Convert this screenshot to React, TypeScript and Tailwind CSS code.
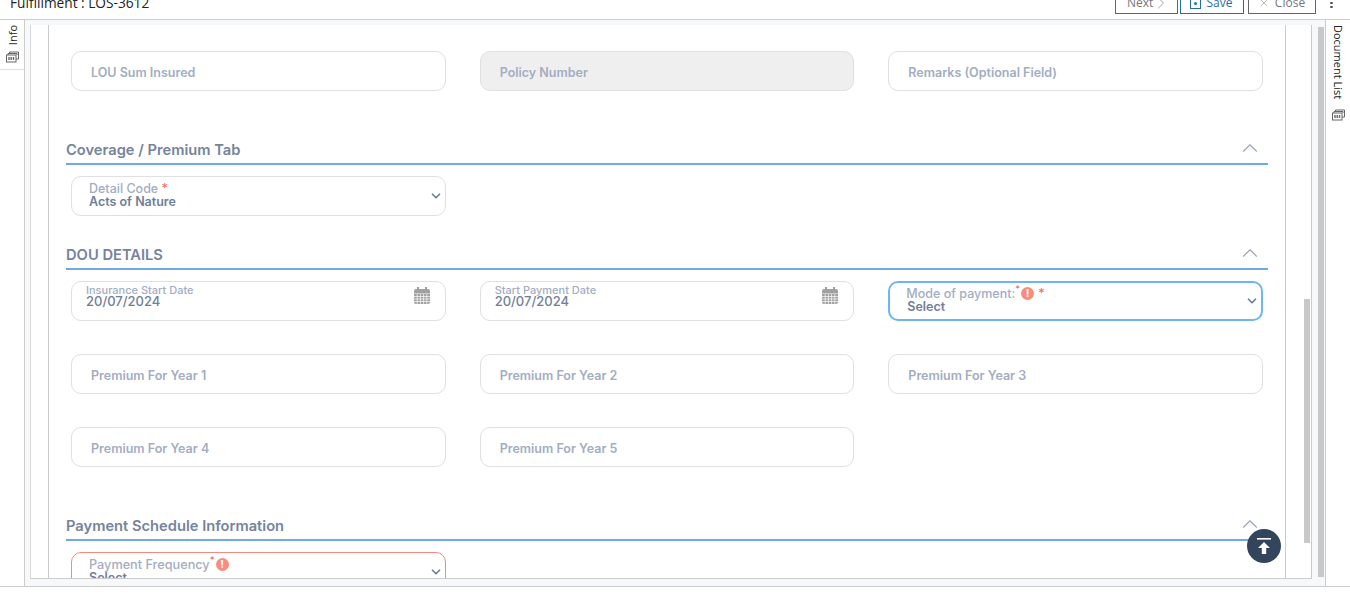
import React from 'react';
import { ChevronDown, ChevronRight, ChevronUp, X } from 'lucide-react';

const labelFont = "font-['Inter','Liberation_Sans',sans-serif]";

const StackIcon = ({ className }: { className?: string }) => (
  <svg className={className} width="13" height="12" viewBox="0 0 13 12" fill="none" stroke="#666" strokeWidth="1">
    <path d="M3.5 2.5V1h9v7H10" />
    <path d="M2 4V2.5h9V4" />
    <rect x="0.5" y="4" width="9.5" height="7" fill="#fff" />
    <path d="M3 6v3M5.2 6v3M7.5 6v3" strokeWidth="1.4" />
  </svg>
);

const CalendarIcon = () => (
  <svg className="absolute right-[15px] top-[5px]" width="16" height="17" viewBox="0 0 16 17">
    <path d="M0 4a2 2 0 0 1 2-2h1V0h2v2h6V0h2v2h1a2 2 0 0 1 2 2v2H0z" fill="#a0a0a0" />
    <path d="M0 6.5h16V15a2 2 0 0 1-2 2H2a2 2 0 0 1-2-2z" fill="#a0a0a0" />
    <path d="M0 9.5h16M0 12h16M0 14.5h16M3.2 7v10M6.4 7v10M9.6 7v10M12.8 7v10" stroke="#fff" strokeWidth="0.7" />
  </svg>
);

const AlertDot = () => (
  <span className="ml-[1px] flex h-[13px] w-[13px] items-center justify-center rounded-full bg-[#fb8b7c] text-[11px] font-bold leading-none text-white">
    !
  </span>
);

const TextField = ({ label, disabled }: { label: string; disabled?: boolean }) => (
  <div
    className={`flex h-[40px] items-center rounded-[10px] border border-[#e0e0e0] pl-[19px] pt-[4px] text-[12.5px] font-semibold text-[#a3adc2] ${
      disabled ? 'bg-[#efefef]' : 'bg-white'
    }`}
  >
    {label}
  </div>
);

const DateField = ({ label, value }: { label: string; value: string }) => (
  <div className="relative flex h-[40px] flex-col rounded-[10px] border border-[#e0e0e0] bg-white pl-[14px] pt-[3px]">
    <span className="text-[11px] font-medium leading-[11px] text-[#a3adc2]">{label}</span>
    <span className="text-[13px] font-medium leading-[11px] text-[#6f7f99]">{value}</span>
    <CalendarIcon />
  </div>
);

const SectionHeader = ({ title }: { title: string }) => (
  <div className="flex h-[30px] items-center justify-between border-b-2 border-[#70a9e6] pr-[5px]">
    <span className="mt-[2px] text-[14.7px] font-semibold text-[#75849c]">{title}</span>
    <ChevronUp className="-mt-[2px] text-[#9aa4b5]" size={26} strokeWidth={1} />
  </div>
);

const App: React.FC = () => {
  return (
    <div className={`flex h-[602px] w-[1350px] flex-col overflow-hidden bg-white ${labelFont}`}>
      {/* Top bar, scrolled partly out of view */}
      <header className="flex h-[20px] shrink-0 items-end justify-between overflow-hidden border-b border-[#cccccc] pb-[5px] pl-[10px] pr-[17px] font-['Open_Sans',sans-serif]">
        <span className="mb-[1px] text-[13.7px] leading-[20px] text-[#222222]">Fulfillment : LOS-3612</span>
        <div className="flex items-end">
          <button className="flex h-[22px] w-[63px] shrink-0 items-center border border-[#666666] pl-[11px] text-[12px] text-[#777777]">
            Next <ChevronRight className="-ml-[2px]" size={20} strokeWidth={0.8} />
          </button>
          <button className="ml-[2px] flex h-[22px] w-[64px] shrink-0 items-center justify-center gap-[6px] border border-[#1f6fa8] pr-[2px] text-[12px] text-[#1f6fa8]">
            <span className="flex h-[11px] w-[11px] items-center justify-center border border-[#1f6fa8]">
              <span className="h-[3px] w-[3px] rounded-full bg-[#1f6fa8]" />
            </span>
            Save
          </button>
          <button className="ml-[4px] flex h-[22px] w-[68px] shrink-0 items-center justify-center gap-[5px] border border-[#666666] pr-[1px] text-[12px] text-[#777777]">
            <X size={12} strokeWidth={1} /> Close
          </button>
          <div className="ml-[14px] flex flex-col gap-[2px] pb-[6px]">
            <span className="h-[2px] w-[3px] rounded-full bg-[#555555]" />
            <span className="h-[2px] w-[3px] rounded-full bg-[#555555]" />
          </div>
        </div>
      </header>

      <div className="flex h-[567px] shrink-0 border-b border-[#cccccc]">
        {/* Left rail */}
        <aside className="w-[25px] shrink-0 border-r border-[#cccccc]">
          <div className="flex h-[50px] flex-col items-center gap-[6px] border-b border-[#dddddd] pt-[5px]">
            <span className="ml-[1px] rotate-180 font-['Open_Sans',sans-serif] text-[11px] leading-none text-[#222222] [writing-mode:vertical-rl]">
              Info
            </span>
            <StackIcon />
          </div>
        </aside>

        {/* Main */}
        <main className="flex w-[1300px] shrink-0 bg-[#f7f8fa] pb-[7px] pl-[5px] pt-[5px]">
          <div className="flex h-[554px] w-[1282px] shrink-0 overflow-hidden border-x border-b border-b-[#cccccc] border-l-[#d8d8d8] border-r-[#cccccc] bg-white">
            <div className="h-full w-[18px] shrink-0 border-r border-[#cccccc]" />
            <div className="h-full w-[1236px] shrink-0 overflow-hidden pl-[17px] pt-[26px]">
              <div className="w-[1202px]">
                <div className="grid grid-cols-3 gap-x-[34px] gap-y-[33px] px-[5px]">
                  <TextField label="LOU Sum Insured" />
                  <TextField label="Policy Number" disabled />
                  <TextField label="Remarks (Optional Field)" />
                </div>

                <div className="mt-[44px]">
                  <SectionHeader title="Coverage / Premium Tab" />
                </div>
                <div className="mt-[11px] grid grid-cols-3 gap-x-[34px] px-[5px]">
                  <div className="relative flex h-[40px] flex-col rounded-[10px] border border-[#e0e0e0] bg-white pl-[17px] pt-[5px]">
                    <span className="text-[12.5px] font-medium leading-[13px] text-[#a3adc2]">
                      Detail Code <span className="text-[#f0706a]">*</span>
                    </span>
                    <span className="text-[12.5px] font-semibold leading-[13px] text-[#6f7f99]">Acts of Nature</span>
                    <ChevronDown className="absolute right-[2px] top-[12px] text-[#6f7f99]" size={14} strokeWidth={3} />
                  </div>
                </div>

                <div className="mt-[24px]">
                  <SectionHeader title="DOU DETAILS" />
                </div>
                <div className="mt-[11px] grid grid-cols-3 gap-x-[34px] gap-y-[33px] px-[5px]">
                  <DateField label="Insurance Start Date" value="20/07/2024" />
                  <DateField label="Start Payment Date" value="20/07/2024" />
                  <div className="relative flex h-[40px] flex-col rounded-[10px] border-2 border-[#6cb6f5] bg-white pl-[16px] pt-[4px]">
                    <span className="flex items-center text-[12.5px] font-medium leading-[13px] text-[#a3adc2]">
                      Mode of payment:
                      <sup className="text-[#f0706a]">*</sup>
                      <AlertDot />
                      <span className="ml-[4px] text-[#f0706a]">*</span>
                    </span>
                    <span className="pl-[1px] text-[12.5px] font-semibold leading-[13px] text-[#6f7f99]">Select</span>
                    <ChevronDown className="absolute right-[2px] top-[11px] text-[#6f7f99]" size={14} strokeWidth={3} />
                  </div>
                  <TextField label="Premium For Year 1" />
                  <TextField label="Premium For Year 2" />
                  <TextField label="Premium For Year 3" />
                  <TextField label="Premium For Year 4" />
                  <TextField label="Premium For Year 5" />
                </div>

                <div className="mt-[44px]">
                  <SectionHeader title="Payment Schedule Information" />
                </div>
                <div className="mt-[11px] grid grid-cols-3 gap-x-[34px] px-[5px]">
                  <div className="relative flex h-[40px] flex-col rounded-[10px] border border-[#f28b7e] bg-white pl-[17px] pt-[5px]">
                    <span className="flex items-center text-[12.7px] font-medium leading-[13px] text-[#a3adc2]">
                      Payment Frequency
                      <sup className="text-[#f0706a]">*</sup>
                      <AlertDot />
                    </span>
                    <span className="text-[12.5px] font-semibold leading-[13px] text-[#6f7f99]">Select</span>
                    <ChevronDown className="absolute right-[2px] top-[12px] text-[#6f7f99]" size={14} strokeWidth={3} />
                  </div>
                </div>
              </div>
            </div>
            {/* Inner scrollbar */}
            <div className="h-full w-[26px] shrink-0 border-l border-[#cccccc] pl-[18px] pt-[274px]">
              <div className="h-[244px] w-[6px] bg-[#c8c8c8]" />
            </div>
          </div>

          {/* Outer scrollbar */}
          <div className="ml-[6px] mt-[2px] h-[550px] w-[6px] shrink-0 bg-[#c8c8c8]" />
        </main>

        {/* Right rail */}
        <aside className="flex flex-1 flex-col items-center gap-[10px] border-l border-[#cccccc] pt-[5px]">
          <span className="font-['Open_Sans',sans-serif] text-[11px] leading-none text-[#222222] [writing-mode:vertical-rl]">
            Document List
          </span>
          <StackIcon />
        </aside>
      </div>

      {/* Back to top */}
      <button className="absolute left-[1247px] top-[529px] flex h-[34px] w-[34px] items-center justify-center rounded-full bg-[#33455c]">
        <svg width="14" height="17" viewBox="0 0 14 17" fill="#fff">
          <rect x="0" y="0" width="14" height="1.6" />
          <path d="M7 4l6 6H9.2v6H4.8v-6H1z" />
        </svg>
      </button>
    </div>
  );
};

export default App;
